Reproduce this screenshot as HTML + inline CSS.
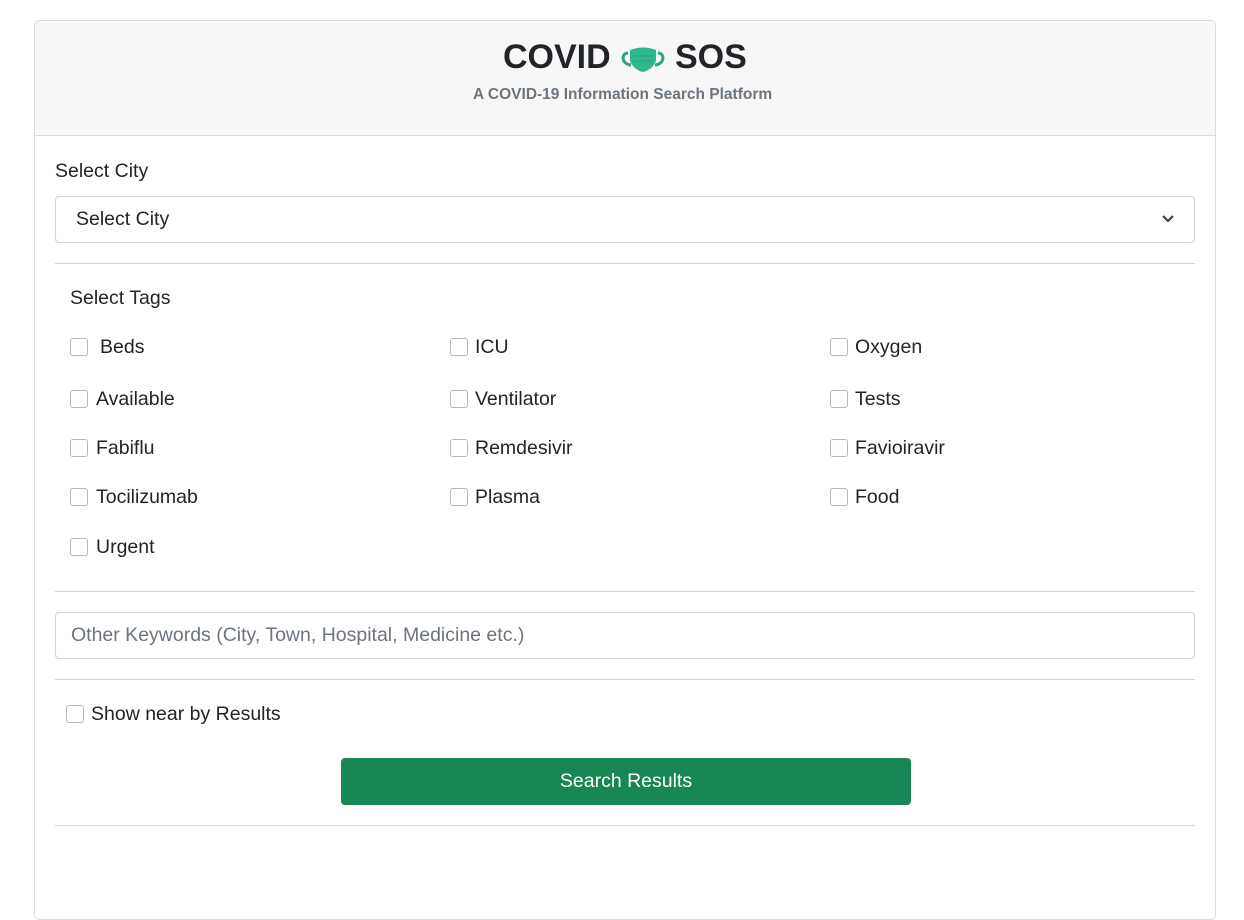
<!DOCTYPE html>
<html><head><style>
*{box-sizing:border-box;margin:0;padding:0}
body{width:1244px;height:853px;background:#fff;font-family:"Liberation Sans",sans-serif;color:#212529;position:relative;overflow:hidden}
.card{position:absolute;left:34px;top:20px;width:1182px;height:900px;border:1px solid #dcdcdc;border-radius:5px}
.hdr{position:absolute;left:35px;top:21px;width:1180px;height:115px;background:#f7f7f7;border-bottom:1px solid #dcdcdc;border-radius:5px 5px 0 0}
.a{position:absolute;white-space:nowrap}
.t{font-size:19.5px}
.cb{position:absolute;width:18px;height:18px;border:1px solid #b8b8b8;border-radius:3px;background:#fff}
.hr{position:absolute;left:55px;width:1140px;height:1px;background:#d5d5d5}
.box{position:absolute;left:55px;width:1140px;height:47px;border:1px solid #ced4da;border-radius:4px}
</style></head><body>
<div class="card"></div>
<div class="hdr"></div>
<div class="a" style="left:503px;top:38px;font-size:34px;font-weight:bold">COVID</div>
<svg class="a" style="left:619px;top:42px" width="48" height="34" viewBox="0 0 48 34">
<path d="M9 11c-7 0-7 11 3 12M39 11c7 0 7 11-3 12" fill="none" stroke="#2aa57f" stroke-width="3"/>
<path d="M11 8q13-5 26 0v11q-4 9-13 11q-9-2-13-11z" fill="#2fb88e"/>
<path d="M14 14h20M14 19h20" stroke="#26a07a" stroke-width="1"/>
</svg>
<div class="a" style="left:675px;top:38px;font-size:34px;font-weight:bold">SOS</div>
<div class="a" style="left:473px;top:86px;font-size:15.5px;font-weight:bold;color:#6c757d">A COVID-19 Information Search Platform</div>
<div class="a t" style="left:55px;top:160px">Select City</div>
<div class="box" style="top:196px"></div>
<div class="a t" style="left:76px;top:208px">Select City</div>
<svg class="a" style="left:1161px;top:213px" width="14" height="12" viewBox="0 0 14 12"><path d="M2 3l5 5 5-5" fill="none" stroke="#343a40" stroke-width="2"/></svg>
<div class="hr" style="top:263px"></div>
<div class="a t" style="left:70px;top:287px">Select Tags</div>
<div class="cb" style="left:70px;top:338px"></div><div class="a t" style="left:100px;top:336px">Beds</div>
<div class="cb" style="left:450px;top:338px"></div><div class="a t" style="left:475px;top:336px">ICU</div>
<div class="cb" style="left:830px;top:338px"></div><div class="a t" style="left:855px;top:336px">Oxygen</div>
<div class="cb" style="left:70px;top:390px"></div><div class="a t" style="left:96px;top:388px">Available</div>
<div class="cb" style="left:450px;top:390px"></div><div class="a t" style="left:475px;top:388px">Ventilator</div>
<div class="cb" style="left:830px;top:390px"></div><div class="a t" style="left:855px;top:388px">Tests</div>
<div class="cb" style="left:70px;top:439px"></div><div class="a t" style="left:96px;top:437px">Fabiflu</div>
<div class="cb" style="left:450px;top:439px"></div><div class="a t" style="left:475px;top:437px">Remdesivir</div>
<div class="cb" style="left:830px;top:439px"></div><div class="a t" style="left:855px;top:437px">Favioiravir</div>
<div class="cb" style="left:70px;top:488px"></div><div class="a t" style="left:96px;top:486px">Tocilizumab</div>
<div class="cb" style="left:450px;top:488px"></div><div class="a t" style="left:475px;top:486px">Plasma</div>
<div class="cb" style="left:830px;top:488px"></div><div class="a t" style="left:855px;top:486px">Food</div>
<div class="cb" style="left:70px;top:538px"></div><div class="a t" style="left:96px;top:536px">Urgent</div>
<div class="hr" style="top:591px"></div>
<div class="box" style="top:612px"></div>
<div class="a t" style="left:71px;top:624px;color:#6c757d">Other Keywords (City, Town, Hospital, Medicine etc.)</div>
<div class="hr" style="top:679px"></div>
<div class="cb" style="left:66px;top:705px"></div><div class="a t" style="left:91px;top:703px">Show near by Results</div>
<div class="a" style="left:341px;top:758px;width:570px;height:47px;background:#198754;border-radius:4px;color:#fff;font-size:19.5px;text-align:center;line-height:47px">Search Results</div>
<div class="hr" style="top:825px"></div>
</body></html>
